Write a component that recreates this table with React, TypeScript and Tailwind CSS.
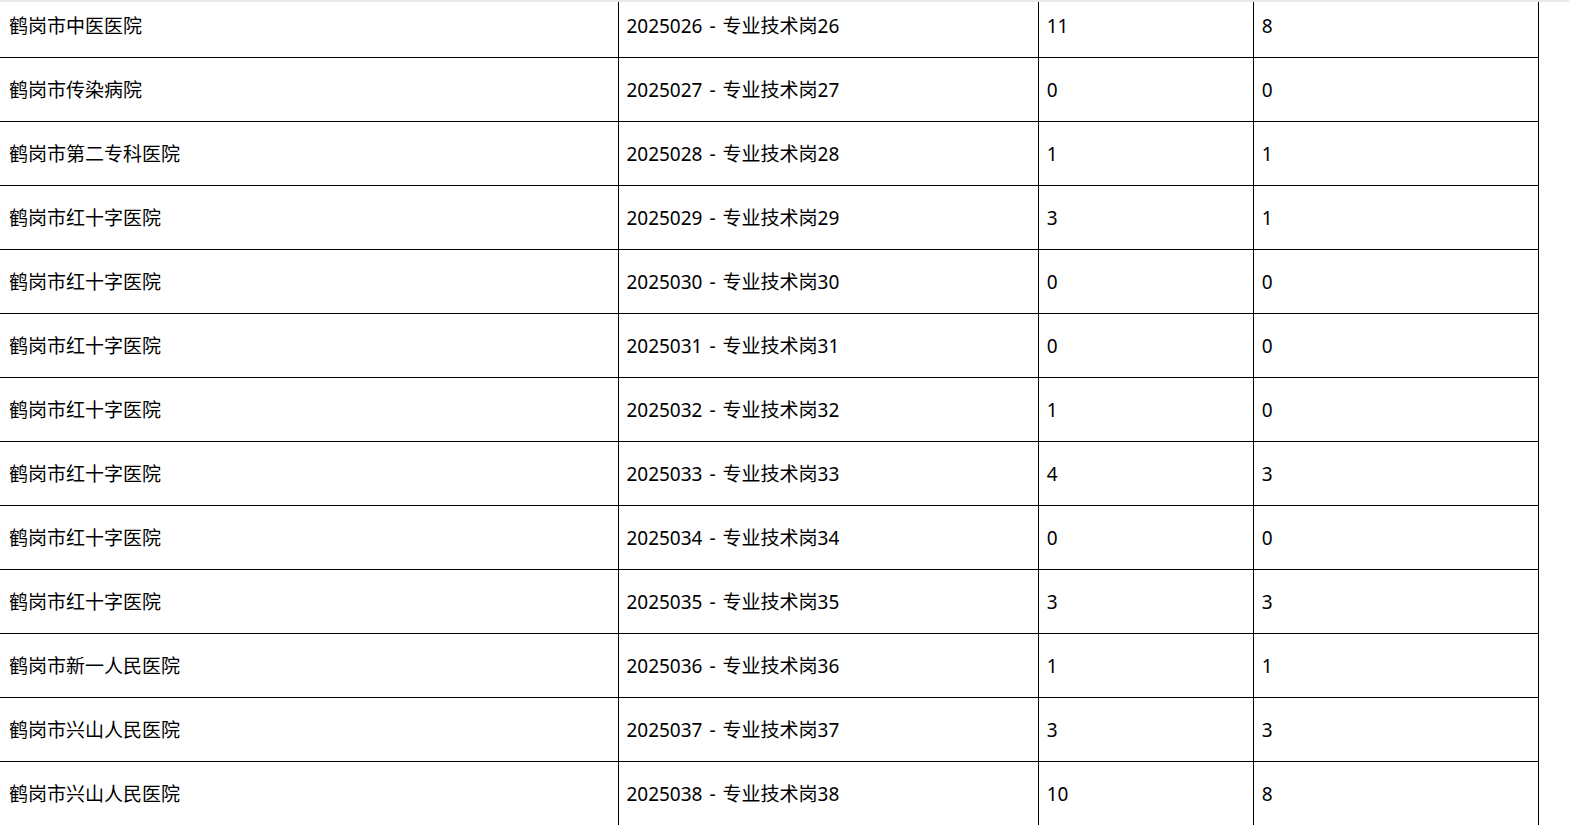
import React from 'react';

const rows: [string, string, string, string][] = [
  ['鹤岗市中医医院', '2025026 - 专业技术岗26', '11', '8'],
  ['鹤岗市传染病院', '2025027 - 专业技术岗27', '0', '0'],
  ['鹤岗市第二专科医院', '2025028 - 专业技术岗28', '1', '1'],
  ['鹤岗市红十字医院', '2025029 - 专业技术岗29', '3', '1'],
  ['鹤岗市红十字医院', '2025030 - 专业技术岗30', '0', '0'],
  ['鹤岗市红十字医院', '2025031 - 专业技术岗31', '0', '0'],
  ['鹤岗市红十字医院', '2025032 - 专业技术岗32', '1', '0'],
  ['鹤岗市红十字医院', '2025033 - 专业技术岗33', '4', '3'],
  ['鹤岗市红十字医院', '2025034 - 专业技术岗34', '0', '0'],
  ['鹤岗市红十字医院', '2025035 - 专业技术岗35', '3', '3'],
  ['鹤岗市新一人民医院', '2025036 - 专业技术岗36', '1', '1'],
  ['鹤岗市兴山人民医院', '2025037 - 专业技术岗37', '3', '3'],
  ['鹤岗市兴山人民医院', '2025038 - 专业技术岗38', '10', '8'],
];

const cell = 'h-[64px] border border-black px-[8px] pt-[2px] align-middle whitespace-nowrap';

const App: React.FC = () => {
  return (
    <main
      className="h-[825px] w-full bg-white flex flex-col overflow-hidden text-[19px] text-black"
      style={{ fontFamily: '"Noto Sans", "Noto Sans CJK SC", sans-serif' }}
    >
      {/* top strip */}
      <div className="h-[2px] bg-[#e9e9e9] shrink-0" />

      {/* scrolled table */}
      <div className="flex-1 overflow-hidden">
        <table className="-mt-[9px] -ml-[1px] w-[1540px] table-fixed border-collapse">
          <colgroup>
            <col className="w-[619px]" />
            <col className="w-[419px]" />
            <col className="w-[215px]" />
            <col className="w-[285px]" />
          </colgroup>
          <tbody>
            {rows.map((r, i) => {
              const [code, post] = r[1].split(' - ');
              return (
                <tr key={i}>
                  <td className={`${cell} pl-[9px]`}>{r[0]}</td>
                  <td className={`${cell} pl-[7px]`}>
                    {code}
                    <span className="px-[7px]">-</span>
                    {post}
                  </td>
                  <td className={`${cell} pl-[8px]`}>{r[2]}</td>
                  <td className={`${cell} pl-[8px]`}>{r[3]}</td>
                </tr>
              );
            })}
          </tbody>
        </table>
      </div>
    </main>
  );
};

export default App;
